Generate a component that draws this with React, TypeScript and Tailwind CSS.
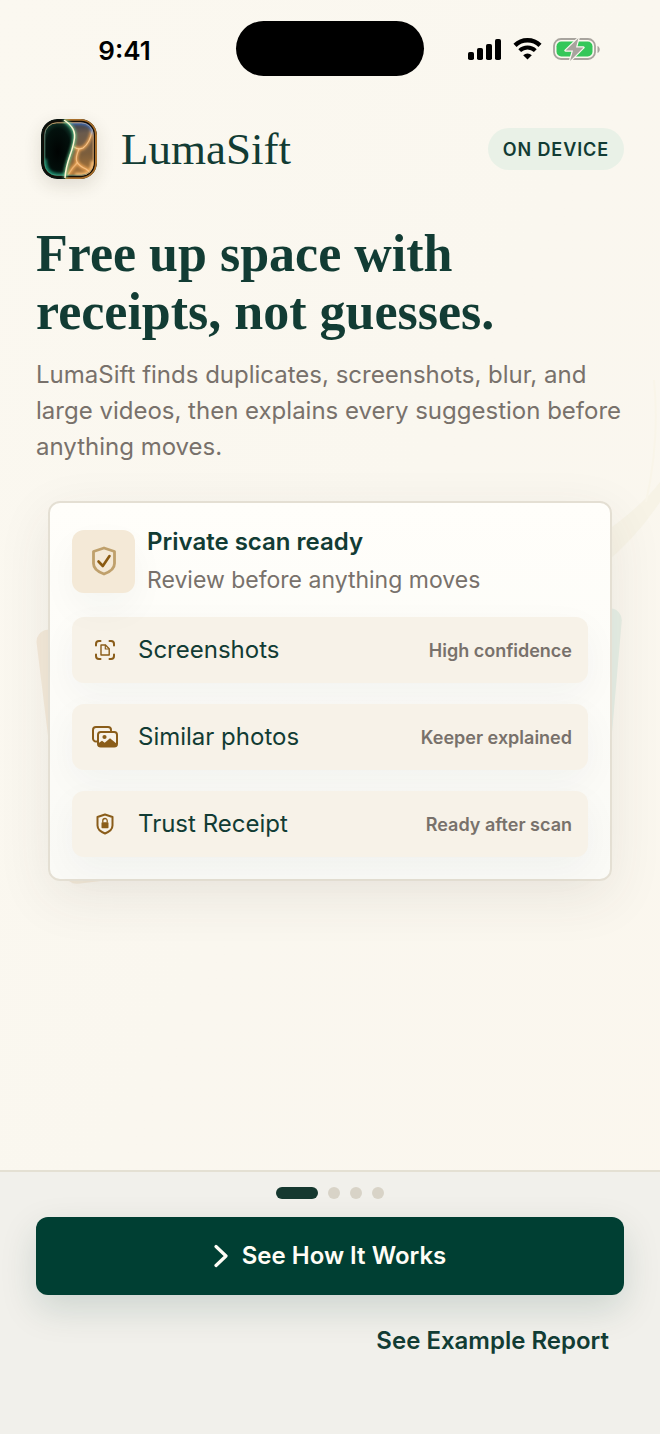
import type { ReactNode } from "react";

const SERIF = "font-['Liberation_Serif',serif]";

function StatusBar() {
  return (
    <div className="grid h-[97px] grid-cols-[1fr_188px_1fr] items-center text-black">
      <div className="pt-1 pl-[13px] text-center text-[26px] font-semibold">9:41</div>
      <div className="h-[55px] rounded-full bg-black" />
      <div className="flex items-center gap-[11px] pl-11">
        <svg width="34" height="22" viewBox="0 0 34 22" aria-label="Signal">
          <rect x="0" y="14" width="6" height="8" rx="1.8" />
          <rect x="9" y="10" width="6" height="12" rx="1.8" />
          <rect x="18" y="6" width="6" height="16" rx="1.8" />
          <rect x="27" y="1" width="6" height="21" rx="1.8" />
        </svg>
        <svg width="29" height="22" viewBox="0 0 29 22" fill="none" aria-label="Wi-Fi">
          <path d="M2 7.4a17.8 17.8 0 0 1 25 0" stroke="currentColor" strokeWidth="4.4" />
          <path d="M6.7 12.6a11.2 11.2 0 0 1 15.6 0" stroke="currentColor" strokeWidth="4" />
          <path d="M14.5 21.5 10.2 17.2a6.2 6.2 0 0 1 8.6 0z" fill="currentColor" />
        </svg>
        <svg width="48" height="24" viewBox="0 0 48 24" fill="none" aria-label="Battery">
          <rect x="1" y="2" width="41" height="20" rx="7" stroke="#a8a49e" strokeWidth="1.8" />
          <rect x="3.5" y="4.5" width="36" height="15" rx="4.8" fill="#34c759" />
          <path d="M44.5 9c3 1.2 3 5.800 0 7z" fill="#a8a49e" />
          <path
            d="M25.500 1 12.500 13.500h7.500L17 24l13.500-13.500h-7.500z"
            fill="#a8a49e"
            stroke="#fbf8f0"
            strokeWidth="2.4"
            strokeLinejoin="round"
            paintOrder="stroke"
          />
        </svg>
      </div>
    </div>
  );
}

function Logo() {
  return (
    <svg
      width="56"
      height="60"
      viewBox="0 0 56 60"
      className="rounded-[16px] shadow-[0_6px_18px_rgba(60,50,30,0.14)]"
      aria-hidden="true"
    >
      <defs>
        <linearGradient id="amber" x1="0.6" y1="0" x2="0.7" y2="1">
          <stop offset="0" stopColor="#26334d" />
          <stop offset="0.25" stopColor="#6a5a4c" />
          <stop offset="0.6" stopColor="#7d5e3b" />
          <stop offset="1" stopColor="#b57a38" />
        </linearGradient>
        <radialGradient id="forest" cx="0.5" cy="0.55" r="0.65">
          <stop offset="0" stopColor="#000302" />
          <stop offset="0.6" stopColor="#03110d" />
          <stop offset="1" stopColor="#1d5a46" />
        </radialGradient>
        <linearGradient id="rim" x1="0" y1="1" x2="1" y2="0">
          <stop offset="0" stopColor="#2aa482" />
          <stop offset="0.4" stopColor="#6b8577" />
          <stop offset="0.6" stopColor="#f0b672" />
          <stop offset="0.85" stopColor="#e8b27a" />
          <stop offset="1" stopColor="#4d86d9" />
        </linearGradient>
        <filter id="glow" x="-50%" y="-50%" width="200%" height="200%">
          <feGaussianBlur stdDeviation="1.5" />
        </filter>
        <clipPath id="outer">
          <rect width="56" height="60" rx="16" />
        </clipPath>
        <clipPath id="face">
          <rect x="3.500" y="3.500" width="49" height="53" rx="12" />
        </clipPath>
      </defs>
      <g clipPath="url(#outer)">
        <rect width="56" height="60" fill="#0a120e" />
        <path d="M24 0h32v60H24z" fill="#a86f2c" />
        <rect x="2" y="1.800" width="52" height="56.400" rx="14" fill="#140e07" />
        <g clipPath="url(#face)">
          <rect width="56" height="60" fill="url(#amber)" />
          <path d="M0 0H23C32 7 35 13 33 22C31 35 25 42 24 60H0z" fill="url(#forest)" />
          <path d="M4 40Q4 56 18 56H24" fill="none" stroke="#1f9a78" strokeWidth="3" filter="url(#glow)" />
          <path d="M34 56H40Q52 56 52 42" fill="none" stroke="#ffc277" strokeWidth="4" filter="url(#glow)" />
          <g fill="none" strokeLinecap="round">
            <g stroke="#f6a954" strokeWidth="3" filter="url(#glow)">
              <path d="M33 28Q37 31 42 29Q49 24 51 12" />
              <path d="M38 30Q34 39 36 43Q38 47 45 50L50 54" />
              <path d="M36 44Q31 49 27 56" />
            </g>
            <g stroke="#ffcf98" strokeWidth="1.200">
              <path d="M33 28Q37 31 42 29Q49 24 51 12" opacity="0.8" />
              <path d="M38 30Q34 39 36 43Q38 47 45 50L50 54" opacity="0.7" />
              <path d="M36 44Q31 49 27 56" opacity="0.5" />
            </g>
            <path d="M28 4H40Q51 4 52 14" stroke="#3f7fe0" strokeWidth="2.500" filter="url(#glow)" />
          </g>
        </g>
        <rect x="3.800" y="3.800" width="48.400" height="52.400" rx="12" fill="none" stroke="url(#rim)" strokeWidth="1" opacity="0.85" />
        <path d="M23 1C32 7 35 13 33 22C31 35 25 42 24 59" fill="none" stroke="#6fdf9d" strokeWidth="3.500" opacity="0.8" filter="url(#glow)" />
        <path d="M23 1C32 7 35 13 33 22C31 35 25 42 24 59" fill="none" stroke="#fff4d2" strokeWidth="1.500" />
      </g>
    </svg>
  );
}

function ShieldCheckIcon() {
  return (
    <svg width="26" height="30" viewBox="0 0 26 30" fill="none" strokeLinecap="round" strokeLinejoin="round" aria-hidden="true">
      <path d="M13 2 23.500 5.500V17.500C23.500 22 20 25.500 13 28C6 25.500 2.500 22 2.500 17.500V5.500z" stroke="#bfa06c" strokeWidth="2.800" />
      <path d="m7.500 15.500 4.300 4.500 6.700-10" stroke="#8a5a12" strokeWidth="2.600" />
    </svg>
  );
}

function ScanDocIcon() {
  return (
    <svg width="20" height="20" viewBox="0 0 20 20" fill="none" stroke="currentColor" strokeLinecap="round" strokeLinejoin="round" aria-hidden="true">
      <path d="M1 5.500V4a3 3 0 0 1 3-3h1.500M14.500 1H16a3 3 0 0 1 3 3v1.500M19 14.500V16a3 3 0 0 1-3 3h-1.500M5.500 19H4a3 3 0 0 1-3-3v-1.500" strokeWidth="2" />
      <path d="M6 5h4.500L14.200 8.700v6.300H6z" strokeWidth="1.400" />
      <path d="M10.300 5.200v3.800h3.700" strokeWidth="1.200" />
    </svg>
  );
}

function PhotosIcon() {
  return (
    <svg width="26" height="22" viewBox="0 0 26 22" fill="none" aria-hidden="true">
      <path d="M4.500 15.500H4a3 3 0 0 1-3-3V4a3 3 0 0 1 3-3h12a3 3 0 0 1 3 3v.5" stroke="currentColor" strokeWidth="2" strokeLinecap="round" />
      <rect x="6" y="6" width="19" height="14.500" rx="2.800" stroke="currentColor" strokeWidth="2" />
      <circle cx="12.500" cy="11" r="2.100" fill="currentColor" />
      <path d="M6 17.500 10 14.800l2.700 2 5.300-4.500 7 5.700V19a2 2 0 0 1-2 2H8a2 2 0 0 1-2-2z" fill="currentColor" />
    </svg>
  );
}

function ShieldLockIcon() {
  return (
    <svg width="18" height="22" viewBox="0 0 18 22" fill="none" aria-hidden="true">
      <path d="M9 1.500 16.500 4V12.500C16.500 16 14 18.500 9 20.500C4 18.500 1.500 16 1.500 12.500V4z" stroke="currentColor" strokeWidth="2" strokeLinejoin="round" />
      <rect x="5.500" y="9.300" width="7" height="6" rx="0.800" fill="currentColor" />
      <path d="M6.800 9.500V7.700a2.200 2.200 0 0 1 4.400 0v1.800" stroke="currentColor" strokeWidth="1.300" />
    </svg>
  );
}

const FEATURES: { label: string; status: string; icon: ReactNode }[] = [
  { label: "Screenshots", status: "High confidence", icon: <ScanDocIcon /> },
  { label: "Similar photos", status: "Keeper explained", icon: <PhotosIcon /> },
  { label: "Trust Receipt", status: "Ready after scan", icon: <ShieldLockIcon /> },
];

function ScanCard() {
  return (
    <section className="relative mx-3 mt-9">
      {/* Loose sheets tucked behind the card */}
      <div className="absolute top-[117px] left-[2px] h-64 w-[200px] -rotate-[7deg] rounded-xl bg-[#f4ead9]" />
      <div className="absolute top-[99px] right-0 h-64 w-[200px] rotate-[5deg] rounded-xl bg-[#e7efe5]" />

      <div className="relative rounded-xl border-2 border-[#e4dfd3] bg-linear-to-b from-[#fffefa] to-[#fafaf6] px-[22px] pt-[20px] pb-[22px] shadow-[0_16px_54px_rgba(70,60,50,0.09)]">
        <div className="flex items-center gap-3">
          <div className="grid size-[63px] shrink-0 place-items-center rounded-xl bg-[#f4e9d7] shadow-[0_16px_36px_rgba(20,50,60,0.04)]">
            <ShieldCheckIcon />
          </div>
          <div>
            <h2 className="text-[24px] leading-[38px] font-semibold text-[#123c34]">Private scan ready</h2>
            <p className="text-[23px] leading-[38px] text-[#78716b]">Review before anything moves</p>
          </div>
        </div>

        <ul className="mt-[18px] space-y-[21px]">
          {FEATURES.map((f) => (
            <li
              key={f.label}
              className="flex h-[66px] items-center rounded-xl bg-[#f7f2e8] pr-4 pl-[18px] shadow-[0_12px_36px_rgba(30,40,60,0.045)]"
            >
              <span className="grid w-[30px] shrink-0 place-items-center text-[#8a5d1a]">{f.icon}</span>
              <span className="ml-[18px] flex-1 text-[24px] text-[#123c34]">{f.label}</span>
              <span className="text-[18px] font-semibold text-[#78716b]">{f.status}</span>
            </li>
          ))}
        </ul>
      </div>
    </section>
  );
}

function Footer() {
  return (
    <footer className="relative mt-auto border-t-2 border-[#e4e0d3] bg-[#f1f0eb] px-9 pt-[15px] pb-[60px]">
      <div className="flex justify-center gap-[10px]">
        <span className="h-3 w-[42px] rounded-full bg-[#15382f]" />
        <span className="size-3 rounded-full bg-[#d8d3c7]" />
        <span className="size-3 rounded-full bg-[#d8d3c7]" />
        <span className="size-3 rounded-full bg-[#d8d3c7]" />
      </div>
      <button
        type="button"
        className="mt-[18px] flex h-[78px] w-full cursor-pointer items-center justify-center gap-[14px] rounded-xl bg-[#003f33] text-[24px] font-semibold text-[#fffdf6] shadow-[0_14px_36px_rgba(0,63,51,0.15)]"
      >
        <svg width="14" height="24" viewBox="0 0 14 24" fill="none" stroke="currentColor" strokeWidth="3.200" strokeLinecap="round" strokeLinejoin="round" aria-hidden="true">
          <path d="M2 2.500 12 12 2 21.500" />
        </svg>
        See How It Works
      </button>
      <div className="mt-[13px] flex justify-end pr-[15px]">
        <button type="button" className="h-[66px] cursor-pointer text-[24px] font-semibold text-[#123c34]">
          See Example Report
        </button>
      </div>
    </footer>
  );
}

export default function App() {
  return (
    <main className="relative flex min-h-screen flex-col overflow-hidden bg-linear-to-br from-[#fbf8f0] via-[#faf7ef] to-[#fbf7ee] font-['Inter',sans-serif]">
      {/* Faint ribbon at the right edge */}
      <svg width="60" height="200" viewBox="0 0 60 200" fill="none" className="absolute top-[380px] right-0" aria-hidden="true">
        <path d="M60 102Q44 124 4 153V184Q36 158 60 122z" fill="#f7f3e6" />
        <path d="M54 0Q60 60 46 122" stroke="#f9f5e9" strokeWidth="2" />
      </svg>

      <StatusBar />

      <div className="relative px-9 pb-10">
        <header className="mt-[22px] flex h-[60px] items-center pl-[5px]">
          <Logo />
          <span className={`${SERIF} ml-6 text-[45px] leading-none text-[#123c34]`}>LumaSift</span>
          <span className="ml-auto flex h-[42px] items-center rounded-full bg-[#e9f1e7] px-[15px] text-[18px] font-semibold tracking-wider text-[#123c34]">
            ON DEVICE
          </span>
        </header>

        <h1 className={`${SERIF} mt-[46px] text-[52px] leading-[58px] font-bold text-[#123c34]`}>
          Free up space with
          <br />
          receipts, not guesses.
        </h1>
        <p className="mt-4 text-[24px] leading-9 text-[#78716b]">
          LumaSift finds duplicates, screenshots, blur, and
          <br />
          large videos, then explains every suggestion before
          <br />
          anything moves.
        </p>

        <ScanCard />
      </div>

      <Footer />
    </main>
  );
}
